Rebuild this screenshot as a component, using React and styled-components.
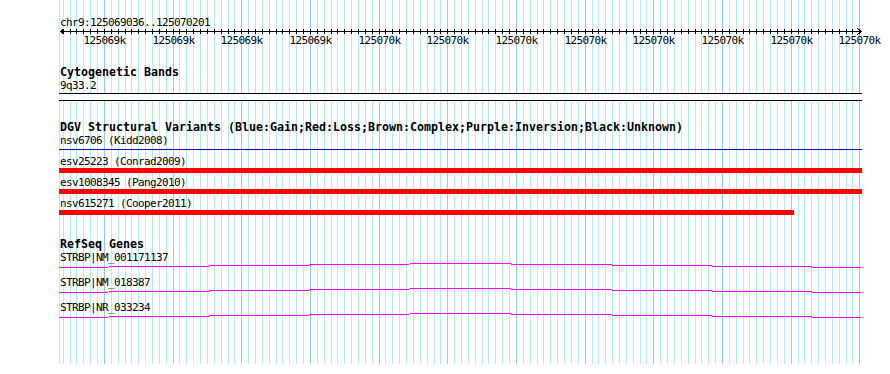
import React from 'react';
import styled, { createGlobalStyle } from 'styled-components';

const START = 125069036;
const END = 125070201;
const LEFT = 60;
const SPAN = 800;
const TRACK_LEFT = 59;
const TRACK_WIDTH = 803;
const GRID_HEIGHT = 364;

const toX = p => Math.round(LEFT + ((p - START) * SPAN) / (END - START));

const gridStops = [];
for (let p = Math.ceil(START / 10) * 10; p <= END; p += 10) {
  gridStops.push({ p, x: toX(p), major: p % 100 === 0 });
}

const GlobalStyle = createGlobalStyle`
  html, body {
    margin: 0;
    padding: 0;
    background: #ffffff;
  }
  body {
    font-family: "DejaVu Sans Mono", "Liberation Mono", monospace;
    color: #000000;
  }
`;

const Page = styled.div`
  position: relative;
  width: 890px;
  height: 374px;
  overflow: hidden;
  background: #ffffff;
`;

const Grid = styled.svg`
  position: absolute;
  top: 0;
  left: 0;
  z-index: 0;
  shape-rendering: crispEdges;
`;

const Tracks = styled.div`
  position: relative;
  z-index: 1;
  display: flex;
  flex-direction: column;
  width: ${TRACK_WIDTH}px;
  margin-left: ${TRACK_LEFT}px;
  padding-top: 16px;
`;

const smallFont = `
  font-size: 11px;
  letter-spacing: -0.62px;
  line-height: 13px;
  white-space: nowrap;
`;

const RangeLabel = styled.div`
  height: 12px;
  padding-left: 1px;
  ${smallFont}
`;

const Axis = styled.svg`
  display: block;
  shape-rendering: crispEdges;
`;

const TickLabels = styled.div`
  position: relative;
  height: 12.5px;
  margin-top: -1.5px;
`;

const TickLabel = styled.span`
  position: absolute;
  top: 0;
  transform: translateX(-50%);
  ${smallFont}
`;

const Track = styled.section`
  display: flex;
  flex-direction: column;
  margin-top: 20px;
`;

const TrackTitle = styled.h3`
  margin: 0;
  padding-left: 1px;
  height: 13px;
  font-size: 11.63px;
  font-weight: bold;
  line-height: 13px;
  white-space: nowrap;
`;

const FeatureLabel = styled.div`
  position: relative;
  z-index: 1;
  flex: none;
  height: 13px;
  padding-left: 1px;
  ${smallFont}
`;

const Band = styled.div`
  height: 6px;
  margin-top: 1px;
  background: #ffffff;
  border-top: 1px solid #000000;
  border-bottom: 1px solid #000000;
`;

const VariantRow = styled.div`
  display: flex;
  flex-direction: column;
  height: 21px;
`;

const VariantGlyph = styled.div`
  position: relative;
  height: 5px;
  width: ${p => p.$width}px;
  background: ${p => (p.$kind === 'loss' ? '#ff0000' : 'transparent')};
  ${p => p.$kind === 'gain' && `
    &::after {
      content: '';
      position: absolute;
      left: 0;
      right: 0;
      top: 2px;
      height: 1px;
      background: #0000cc;
    }
  `}
`;

const GeneRow = styled.div`
  display: flex;
  flex-direction: column;
  height: 25px;
`;

const GeneGlyph = styled.svg`
  display: block;
  flex: none;
  overflow: visible;
  shape-rendering: crispEdges;
`;

const variants = [
  { name: 'nsv6706 (Kidd2008)', kind: 'gain', width: 803 },
  { name: 'esv25223 (Conrad2009)', kind: 'loss', width: 803 },
  { name: 'esv1008345 (Pang2010)', kind: 'loss', width: 803 },
  { name: 'nsv615271 (Cooper2011)', kind: 'loss', width: 735 },
];

const genes = ['STRBP|NM_001171137', 'STRBP|NM_018387', 'STRBP|NR_033234'];

const GridLines = () => (
  <Grid width={890} height={GRID_HEIGHT}>
    <line x1={TRACK_LEFT + 0.5} y1={0} x2={TRACK_LEFT + 0.5} y2={GRID_HEIGHT} stroke="#afeeee" />
    {gridStops.filter(s => !s.major).map(s => (
      <line key={s.p} x1={s.x + 0.5} y1={0} x2={s.x + 0.5} y2={GRID_HEIGHT} stroke="#afeeee" />
    ))}
    {gridStops.filter(s => s.major).map(s => (
      <line key={s.p} x1={s.x + 0.5} y1={0} x2={s.x + 0.5} y2={GRID_HEIGHT} stroke="#87cefa" />
    ))}
  </Grid>
);

const Ruler = () => {
  const from = LEFT - TRACK_LEFT;
  const to = 861 - TRACK_LEFT;
  return (
    <>
      <Axis width={TRACK_WIDTH} height={7}>
        <line x1={from} y1={3.5} x2={to + 1} y2={3.5} stroke="#000" />
        <polyline points={`${from + 4.5},0.5 ${from + 0.5},3.5 ${from + 4.5},6.5`} fill="none" stroke="#000" />
        <polyline points={`${to - 3.5},0.5 ${to + 0.5},3.5 ${to - 3.5},6.5`} fill="none" stroke="#000" />
        {gridStops.map(s => (
          <line key={s.p} x1={s.x - TRACK_LEFT + 0.5} y1={1} x2={s.x - TRACK_LEFT + 0.5} y2={6} stroke="#000" />
        ))}
      </Axis>
      <TickLabels>
        {gridStops.filter(s => s.major).map(s => (
          <TickLabel key={s.p} style={{ left: s.x - TRACK_LEFT + 0.5 }}>
            {`${Math.round(s.p / 1000)}k`}
          </TickLabel>
        ))}
      </TickLabels>
    </>
  );
};

const App = () => (
  <Page>
    <GlobalStyle />
    <GridLines />
    <Tracks>
      <RangeLabel>chr9:125069036..125070201</RangeLabel>
      <Ruler />

      <Track>
        <TrackTitle>Cytogenetic Bands</TrackTitle>
        <FeatureLabel>9q33.2</FeatureLabel>
        <Band />
      </Track>

      <Track>
        <TrackTitle>DGV Structural Variants (Blue:Gain;Red:Loss;Brown:Complex;Purple:Inversion;Black:Unknown)</TrackTitle>
        {variants.map(v => (
          <VariantRow key={v.name}>
            <FeatureLabel>{v.name}</FeatureLabel>
            <VariantGlyph $kind={v.kind} $width={v.width} />
          </VariantRow>
        ))}
      </Track>

      <Track>
        <TrackTitle>RefSeq Genes</TrackTitle>
        {genes.map(g => (
          <GeneRow key={g}>
            <FeatureLabel>{g}</FeatureLabel>
            <GeneGlyph width={TRACK_WIDTH} height={11}>
              <polyline points="0,3.5 401.5,-0.5 802,3.5" fill="none" stroke="#ff00ff" />
            </GeneGlyph>
          </GeneRow>
        ))}
      </Track>
    </Tracks>
  </Page>
);

export default App;
